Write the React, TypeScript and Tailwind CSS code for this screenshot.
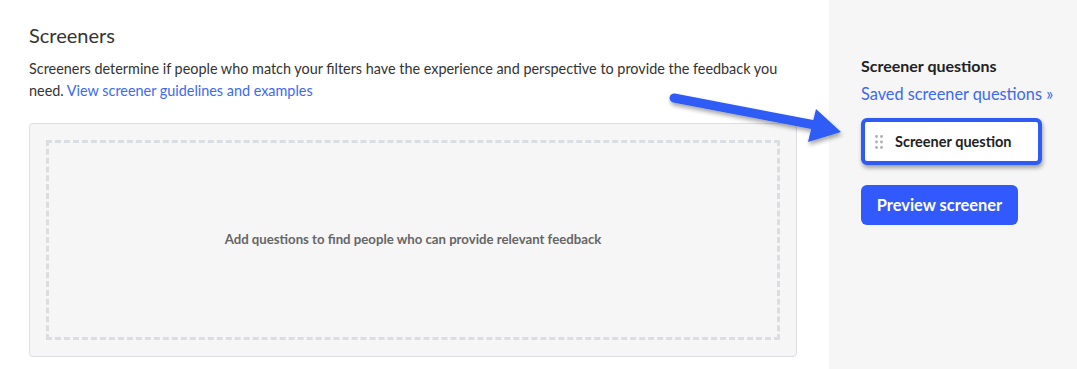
import React from 'react';

function DragDots() {
    return (
        <svg width="8" height="14" viewBox="0 0 8 14" className="shrink-0">
            {[1.5, 7, 12.5].map((y) => (
                <g key={y} fill="#adadad">
                    <circle cx="1.5" cy={y} r="1.4" />
                    <circle cx="6.5" cy={y} r="1.4" />
                </g>
            ))}
        </svg>
    );
}

function Arrow() {
    return (
        <svg
            className="absolute left-0 top-0 pointer-events-none"
            width="1077"
            height="369"
            viewBox="0 0 1077 369"
        >
            <defs>
                <filter id="sh" x="-10%" y="-50%" width="120%" height="200%">
                    <feDropShadow dx="1" dy="3" stdDeviation="2" floodColor="#000" floodOpacity="0.35" />
                </filter>
            </defs>
            <g filter="url(#sh)">
                <line x1="674" y1="98" x2="815" y2="125" stroke="#2f5bf5" strokeWidth="9" strokeLinecap="round" />
                <polygon points="816,109 841,132 808,142" fill="#2f5bf5" />
            </g>
        </svg>
    );
}

export default function App() {
    return (
        <div
            className="relative w-[1077px] h-[369px] flex bg-white overflow-hidden"
            style={{ fontFamily: 'Lato, "Open Sans", sans-serif' }}
        >
            {/* Main */}
            <div className="w-[829px] shrink-0 pl-[29px] pr-[32px] pt-[22px]">
                <h1 className="text-[20px] leading-[26px] text-[#333]">Screeners</h1>
                <p className="mt-[10px] text-[14.4px] leading-[22px] text-[#333] pr-[10px]">
                    Screeners determine if people who match your filters have the experience and perspective to provide the feedback you need.{' '}
                    <a className="text-[#3b6af0]">View screener guidelines and examples</a>
                </p>
                <div className="mt-[21px] h-[234px] rounded-[4px] border border-[#dedee2] bg-[#f6f6f6] p-[16px]">
                    <div className="h-full border-[3px] border-dashed border-[#dcdde2] flex items-center justify-center">
                        <span className="text-[13.2px] font-bold text-[#666]">
                            Add questions to find people who can provide relevant feedback
                        </span>
                    </div>
                </div>
            </div>

            {/* Sidebar */}
            <div className="flex-1 bg-[#f6f6f6] pl-[32px] pt-[56px]">
                <h2 className="text-[16px] leading-[20px] font-bold text-[#222]">Screener questions</h2>
                <a className="block mt-[8px] text-[16.3px] leading-[20px] text-[#3b6af0] whitespace-nowrap">Saved screener questions »</a>
                <div className="mt-[14px] w-[181px] h-[47px] rounded-[6px] border-[4px] border-[#2f5bf5] bg-white shadow-[1px_3px_4px_rgba(0,0,0,0.35)] flex items-center pl-[10px] gap-[12px]">
                    <DragDots />
                    <span className="text-[14.5px] font-bold text-[#222] whitespace-nowrap">Screener question</span>
                </div>
                <button className="mt-[20px] w-[157px] h-[40px] rounded-[6px] bg-[#3159fb] text-white text-[16.4px] font-bold whitespace-nowrap">
                    Preview screener
                </button>
            </div>

            <Arrow />
        </div>
    );
}
